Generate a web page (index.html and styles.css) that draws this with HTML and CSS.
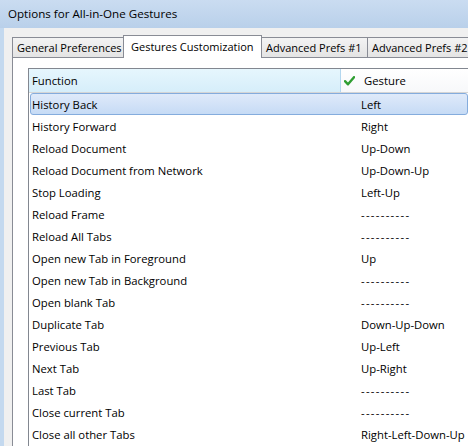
FILE: index.html
```
<!DOCTYPE html>
<html>
<head>
<meta charset="utf-8">
<link rel="stylesheet" href="styles.css">
</head>
<body>
<div class="window">
  <div class="titlebar">Options for All-in-One Gestures</div>
  <div class="client">
    <div class="tabs">
      <div class="tab t1">General Preferences</div>
      <div class="tab t2 active">Gestures Customization</div>
      <div class="tab t3">Advanced Prefs #1</div>
      <div class="tab t4">Advanced Prefs #2</div>
    </div>
    <div class="panel">
      <div class="list">
        <div class="header">
          <div class="hcell hfunc">Function</div>
          <div class="hcell hgest">
            <svg class="check" width="11" height="10" viewBox="0 0 11 10"><path d="M1 5.2 L4 8.3 L10 1.2" fill="none" stroke="#2f9e32" stroke-width="2.4" stroke-linecap="round" stroke-linejoin="round"/></svg>
            <span>Gesture</span>
          </div>
        </div>
        <div class="row selected"><span class="fn">History Back</span><span class="gs">Left</span></div>
        <div class="row"><span class="fn">History Forward</span><span class="gs">Right</span></div>
        <div class="row"><span class="fn">Reload Document</span><span class="gs">Up-Down</span></div>
        <div class="row"><span class="fn">Reload Document from Network</span><span class="gs">Up-Down-Up</span></div>
        <div class="row"><span class="fn">Stop Loading</span><span class="gs">Left-Up</span></div>
        <div class="row"><span class="fn">Reload Frame</span><span class="gs dash">----------</span></div>
        <div class="row"><span class="fn">Reload All Tabs</span><span class="gs dash">----------</span></div>
        <div class="row"><span class="fn">Open new Tab in Foreground</span><span class="gs">Up</span></div>
        <div class="row"><span class="fn">Open new Tab in Background</span><span class="gs dash">----------</span></div>
        <div class="row"><span class="fn">Open blank Tab</span><span class="gs dash">----------</span></div>
        <div class="row"><span class="fn">Duplicate Tab</span><span class="gs">Down-Up-Down</span></div>
        <div class="row"><span class="fn">Previous Tab</span><span class="gs">Up-Left</span></div>
        <div class="row"><span class="fn">Next Tab</span><span class="gs">Up-Right</span></div>
        <div class="row"><span class="fn">Last Tab</span><span class="gs dash">----------</span></div>
        <div class="row"><span class="fn">Close current Tab</span><span class="gs dash">----------</span></div>
        <div class="row"><span class="fn">Close all other Tabs</span><span class="gs">Right-Left-Down-Up</span></div>
      </div>
    </div>
  </div>
</div>
</body>
</html>
```
FILE: styles.css
```
* { box-sizing: border-box; }
html, body {
  margin: 0;
  padding: 0;
  width: 468px;
  height: 446px;
  overflow: hidden;
}
body {
  font-family: "Open Sans", "Noto Sans", sans-serif;
  font-size: 11.3px;
  color: #000;
  background: #c4d9ef;
}
.window {
  width: 468px;
  height: 446px;
  display: flex;
  flex-direction: column;
}
.titlebar {
  height: 28px;
  flex: none;
  padding: 6px 0 0 8px;
  font-size: 11.6px;
  background: linear-gradient(#cadcf1, #b9d0ea);
  white-space: nowrap;
}
.client {
  flex: 1;
  margin-left: 4px;
  background: #f0f0f0;
  padding: 6px 0 0 8px;
  display: flex;
  flex-direction: column;
  min-height: 0;
}
.tabs {
  display: flex;
  align-items: flex-end;
  height: 23px;
  flex: none;
  white-space: nowrap;
  font-size: 11px;
}
.tab {
  flex: none;
  height: 20px;
  border: 1px solid #898c95;
  border-bottom: none;
  border-right: none;
  background: linear-gradient(#f3f3f3, #e4e4e4);
  padding: 2px 0 0 4px;
  overflow: hidden;
}
.t1 { width: 111px; }
.t2 { width: 139px; }
.t3 { width: 105px; border-left: 1px solid #898c95; }
.t4 { width: 110px; }
.tab.active {
  height: 23px;
  background: #fff;
  border-right: 1px solid #898c95;
  margin-bottom: -1px;
  padding: 3px 0 0 7px;
  position: relative;
  z-index: 1;
}
.tab.active + .tab { border-left: none; }
.panel {
  flex: 1;
  background: #fff;
  border-top: 1px solid #898c95;
  border-left: 1px solid #898c95;
  padding: 10px 0 0 15px;
  min-height: 0;
}
.list {
  border-top: 1px solid #828790;
  border-left: 1px solid #828790;
  height: 100%;
}
.header {
  display: flex;
  height: 24px;
  border-bottom: 1px solid #d5d5d5;
}
.hcell {
  display: flex;
  align-items: center;
  white-space: nowrap;
}
.hfunc {
  width: 312px;
  padding-left: 3px;
  background: linear-gradient(#e6f6fd, #d6eefa);
  border-right: 1px solid #b3d7ef;
}
.hgest {
  flex: 1;
  padding-left: 3px;
  background: linear-gradient(#ffffff, #f7f8fa);
}
.check { margin: 0 9px 0 0; }
.row {
  display: flex;
  align-items: center;
  height: 22px;
  white-space: nowrap;
  border: 1px solid transparent;
  margin-left: 1px;
}
.row.selected {
  border-color: #84acdd;
  border-radius: 3px;
  background: linear-gradient(#dfeafa, #c6dbf5);
}
.fn {
  width: 330px;
  padding-left: 1px;
}
.dash { letter-spacing: 1.3px; }
```
